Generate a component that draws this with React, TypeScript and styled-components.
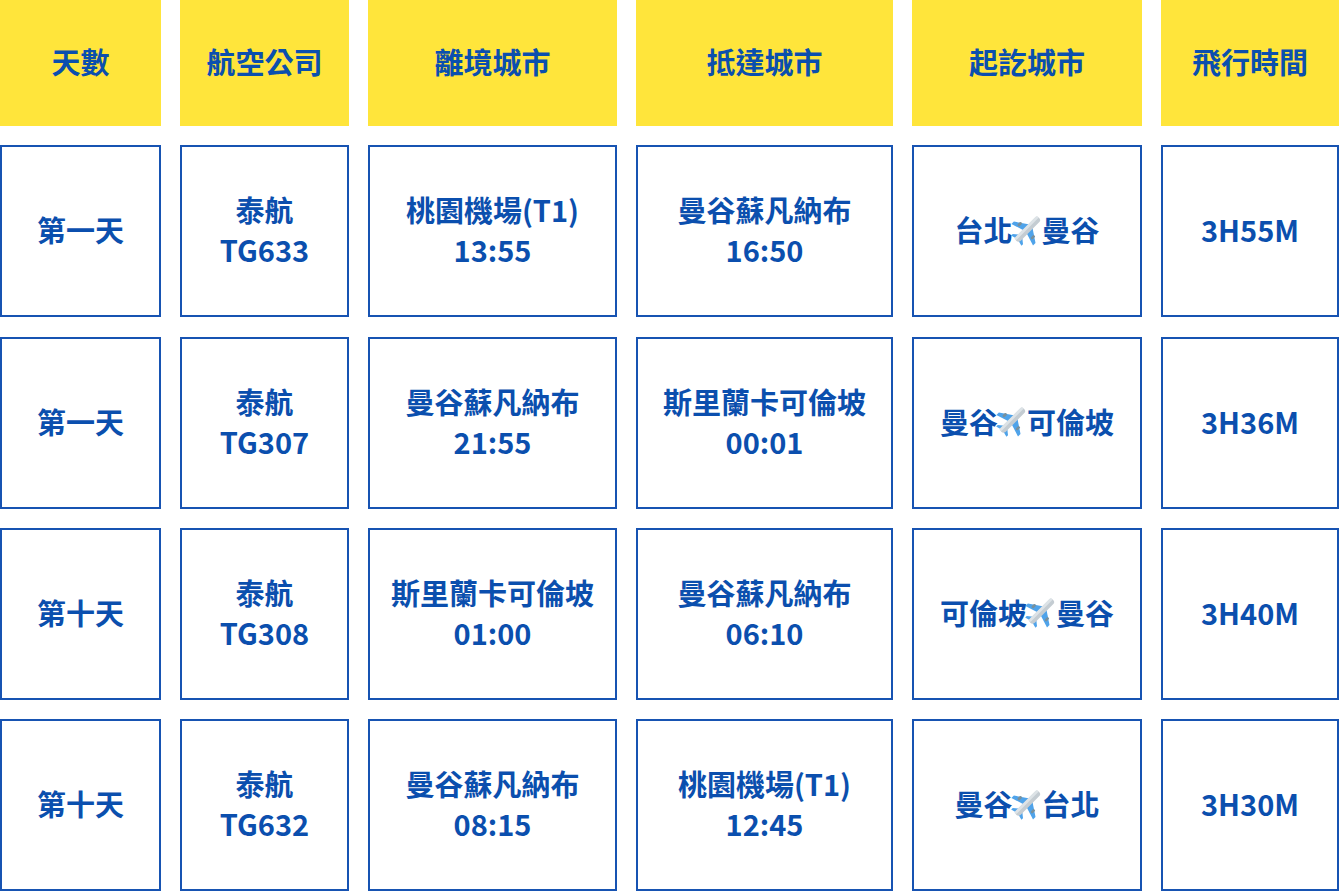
import React from "react";
import styled, { createGlobalStyle } from "styled-components";

const blue = "#0b4fae";
const yellow = "#ffe53b";

const GlobalStyle = createGlobalStyle`
  html, body {
    margin: 0;
    padding: 0;
    background: #ffffff;
  }
  body {
    font-family: "Noto Sans CJK TC", "Noto Sans", sans-serif;
  }
`;

const Table = styled.div`
  display: grid;
  grid-template-columns: 161px 169px 249px 257px 230px 178px;
  grid-template-rows: 126px repeat(4, 172px);
  column-gap: 19px;
  row-gap: 19.3px;
  width: 1339px;
`;

const HeadCell = styled.div`
  display: flex;
  align-items: center;
  justify-content: center;
  box-sizing: border-box;
  padding-bottom: 4px;
  background: ${yellow};
  color: ${blue};
  font-size: 29px;
  font-weight: 700;
`;

const Cell = styled.div`
  display: flex;
  flex-direction: column;
  align-items: center;
  justify-content: center;
  box-sizing: border-box;
  padding-bottom: 4px;
  border: 2px solid #1753b2;
  color: ${blue};
  font-size: 29px;
  font-weight: 700;
  line-height: 40px;
  text-align: center;
`;

const Line = styled.span`
  display: flex;
  align-items: center;
  white-space: nowrap;
`;

const PlaneIcon = styled.svg`
  width: 29px;
  height: 29px;
  overflow: visible;
`;

const Plane = (): JSX.Element => (
  <PlaneIcon viewBox="0 0 32 32">
    <g transform="translate(16 16) rotate(45) scale(1.25) translate(-16 -16)">
      <path d="M14.4 11.5 L2.5 19.5 L2.5 22.6 L14.4 18.8 Z" fill="#4fa3ea" />
      <path d="M17.6 11.5 L29.5 19.5 L29.5 22.6 L17.6 18.8 Z" fill="#4fa3ea" />
      <path d="M14.6 24 L9.6 28 L9.6 30 L14.6 28.6 Z" fill="#4fa3ea" />
      <path d="M17.4 24 L22.4 28 L22.4 30 L17.4 28.6 Z" fill="#4fa3ea" />
      <rect x="6.6" y="15.4" width="2.4" height="4.2" rx="1" fill="#78909c" />
      <rect x="23" y="15.4" width="2.4" height="4.2" rx="1" fill="#78909c" />
      <rect x="13.2" y="1.5" width="5.6" height="28.5" rx="2.8" fill="#c4ccd2" />
      <rect x="13.2" y="1.5" width="2.4" height="28.5" rx="1.2" fill="#dde3e7" />
    </g>
  </PlaneIcon>
);

type Row = {
  day: string;
  airline: string;
  flight: string;
  fromCity: string;
  fromTime: string;
  toCity: string;
  toTime: string;
  routeFrom: string;
  routeTo: string;
  duration: string;
};

const headers = ["天數", "航空公司", "離境城市", "抵達城市", "起訖城市", "飛行時間"];

const rows: Row[] = [
  {
    day: "第一天",
    airline: "泰航",
    flight: "TG633",
    fromCity: "桃園機場(T1)",
    fromTime: "13:55",
    toCity: "曼谷蘇凡納布",
    toTime: "16:50",
    routeFrom: "台北",
    routeTo: "曼谷",
    duration: "3H55M",
  },
  {
    day: "第一天",
    airline: "泰航",
    flight: "TG307",
    fromCity: "曼谷蘇凡納布",
    fromTime: "21:55",
    toCity: "斯里蘭卡可倫坡",
    toTime: "00:01",
    routeFrom: "曼谷",
    routeTo: "可倫坡",
    duration: "3H36M",
  },
  {
    day: "第十天",
    airline: "泰航",
    flight: "TG308",
    fromCity: "斯里蘭卡可倫坡",
    fromTime: "01:00",
    toCity: "曼谷蘇凡納布",
    toTime: "06:10",
    routeFrom: "可倫坡",
    routeTo: "曼谷",
    duration: "3H40M",
  },
  {
    day: "第十天",
    airline: "泰航",
    flight: "TG632",
    fromCity: "曼谷蘇凡納布",
    fromTime: "08:15",
    toCity: "桃園機場(T1)",
    toTime: "12:45",
    routeFrom: "曼谷",
    routeTo: "台北",
    duration: "3H30M",
  },
];

const App = (): JSX.Element => {
  return (
    <React.Fragment>
      <GlobalStyle />
      <Table>
        {headers.map((h) => (
          <HeadCell key={h}>{h}</HeadCell>
        ))}
        {rows.map((r) => (
          <React.Fragment key={r.flight}>
            <Cell>{r.day}</Cell>
            <Cell>
              <Line>{r.airline}</Line>
              <Line>{r.flight}</Line>
            </Cell>
            <Cell>
              <Line>{r.fromCity}</Line>
              <Line>{r.fromTime}</Line>
            </Cell>
            <Cell>
              <Line>{r.toCity}</Line>
              <Line>{r.toTime}</Line>
            </Cell>
            <Cell>
              <Line>
                {r.routeFrom}
                <Plane />
                {r.routeTo}
              </Line>
            </Cell>
            <Cell>{r.duration}</Cell>
          </React.Fragment>
        ))}
      </Table>
    </React.Fragment>
  );
};

export default App;
